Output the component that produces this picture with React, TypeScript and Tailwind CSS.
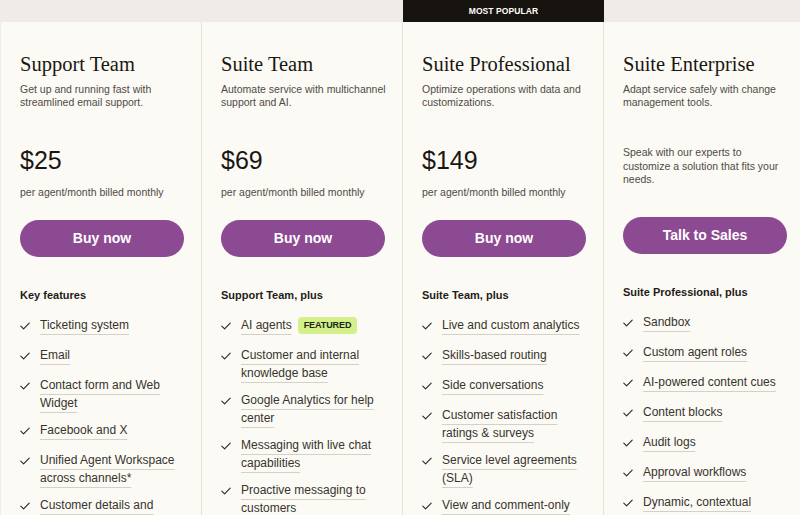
import type React from "react"

type Plan = {
  name: string
  desc: string
  price?: string
  note?: string
  cta: string
  label: string
  popular?: boolean
  features: { text: string; featured?: boolean }[]
}

const plans: Plan[] = [
  {
    name: "Support Team",
    desc: "Get up and running fast with streamlined email support.",
    price: "$25",
    cta: "Buy now",
    label: "Key features",
    features: [
      { text: "Ticketing system" },
      { text: "Email" },
      { text: "Contact form and Web Widget" },
      { text: "Facebook and X" },
      { text: "Unified Agent Workspace across channels*" },
      { text: "Customer details and" },
    ],
  },
  {
    name: "Suite Team",
    desc: "Automate service with multichannel support and AI.",
    price: "$69",
    cta: "Buy now",
    label: "Support Team, plus",
    features: [
      { text: "AI agents", featured: true },
      { text: "Customer and internal knowledge base" },
      { text: "Google Analytics for help center" },
      { text: "Messaging with live chat capabilities" },
      { text: "Proactive messaging to customers" },
    ],
  },
  {
    name: "Suite Professional",
    desc: "Optimize operations with data and customizations.",
    price: "$149",
    cta: "Buy now",
    label: "Suite Team, plus",
    popular: true,
    features: [
      { text: "Live and custom analytics" },
      { text: "Skills-based routing" },
      { text: "Side conversations" },
      { text: "Customer satisfaction ratings & surveys" },
      { text: "Service level agreements (SLA)" },
      { text: "View and comment-only" },
    ],
  },
  {
    name: "Suite Enterprise",
    desc: "Adapt service safely with change management tools.",
    note: "Speak with our experts to customize a solution that fits your needs.",
    cta: "Talk to Sales",
    label: "Suite Professional, plus",
    features: [
      { text: "Sandbox" },
      { text: "Custom agent roles" },
      { text: "AI-powered content cues" },
      { text: "Content blocks" },
      { text: "Audit logs" },
      { text: "Approval workflows" },
      { text: "Dynamic, contextual" },
    ],
  },
]

const Check: React.FC = () => (
  <svg width="10" height="8" viewBox="0 0 10 8" fill="none" className="text-[#2a2620]">
    <path d="M0.8 4.2 L3.6 6.8 L9.2 1.2" stroke="currentColor" strokeWidth="1.1" strokeLinecap="round" strokeLinejoin="round" />
  </svg>
)

const PlanCard: React.FC<{ plan: Plan }> = ({ plan }) => {
  return (
    <div className="flex w-[201px] shrink-0 flex-col">
      <div className="flex h-[22px] shrink-0 items-center justify-center">
        {plan.popular && (
          <div className="flex h-full w-full items-center justify-center bg-[#17140f] text-[8.5px] font-bold tracking-[0.01em] text-white">
            MOST POPULAR
          </div>
        )}
      </div>

      <div className="min-h-0 flex-1 overflow-hidden border-r border-[#e8e2da] bg-[#fcfaf5] pl-[19px] pr-[17px] pt-[29px]">
        <h2 className="font-['Liberation_Serif',serif] text-[20.5px] leading-[26px] text-[#1a1713]">{plan.name}</h2>
        <p className="-mr-[8px] mt-[6px] text-[10.5px] leading-[13px] text-[#4f4b45]">{plan.desc}</p>

        {plan.price ? (
          <>
            <div className="mt-[36px] text-[25px] leading-[30px] text-[#1a1713]">{plan.price}</div>
            <div className="mt-[10px] text-[10.5px] leading-[14px] text-[#4f4b45]">per agent/month billed monthly</div>
            <button className="mt-[21px] flex h-[37px] w-full items-center justify-center rounded-full bg-[#8c4a93] text-[14px] font-bold text-white">
              {plan.cta}
            </button>
          </>
        ) : (
          <>
            <p className="mt-[37px] text-[10.5px] leading-[13.5px] text-[#4f4b45]">{plan.note}</p>
            <button className="mt-[30px] flex h-[37px] w-full items-center justify-center rounded-full bg-[#8c4a93] text-[14px] font-bold text-white">
              {plan.cta}
            </button>
          </>
        )}

        <div className="mt-[30px] text-[11px] font-bold leading-[16px] text-[#1f1c18]">{plan.label}</div>

        <ul className="mt-[13px] flex flex-col gap-[9px]">
          {plan.features.map((f) => (
            <li key={f.text} className="flex min-h-[21px]">
              <div className="flex h-[18px] w-[20px] shrink-0 items-center pt-[2px]">
                <Check />
              </div>
              <div className="text-[12px] leading-[18px] text-[#37332d]">
                <span className="underline decoration-[#d6d0c7] decoration-1 underline-offset-[5px]">{f.text}</span>
                {f.featured && (
                  <span className="ml-[6px] inline-flex h-[17px] items-center rounded-[4px] bg-[#d3f08a] px-[6px] align-middle text-[9px] font-bold leading-none tracking-[-0.01em] text-[#1c2612]">
                    FEATURED
                  </span>
                )}
              </div>
            </li>
          ))}
        </ul>
      </div>
    </div>
  )
}

const App: React.FC = () => {
  return (
    <div className="h-[515px] w-[800px] overflow-hidden bg-[#f0ebe6] font-['Liberation_Sans',Arial,sans-serif]">
      <div className="flex h-full pl-[1px]">
        {plans.map((plan) => (
          <PlanCard key={plan.name} plan={plan} />
        ))}
      </div>
    </div>
  )
}

export default App
